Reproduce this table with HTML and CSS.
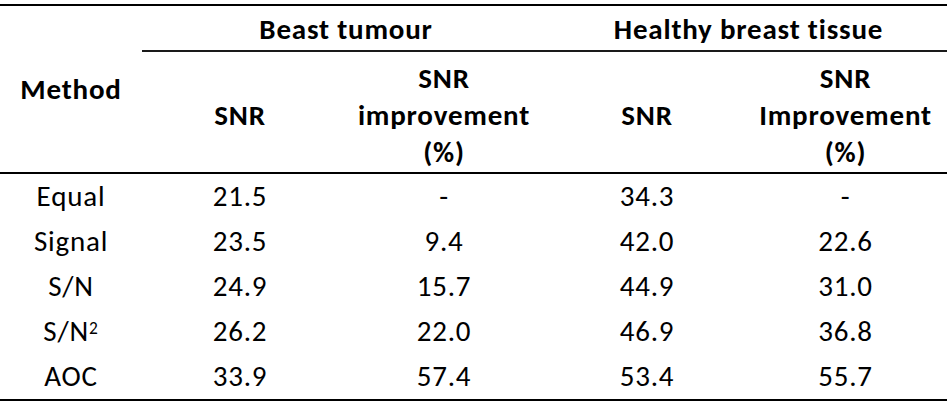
FILE: index.html
```html
<!DOCTYPE html>
<html lang="en">
<head>
<meta charset="utf-8">
<title>SNR table</title>
<link rel="stylesheet" href="styles.css">
</head>
<body>
<div class="page">
  <div class="table">
    <div class="cell head method">Method</div>
    <div class="cell head group">Beast tumour</div>
    <div class="cell head group">Healthy breast tissue</div>

    <div class="cell head sub">SNR</div>
    <div class="cell head sub multi">SNR<br>improvement<br>(%)</div>
    <div class="cell head sub">SNR</div>
    <div class="cell head sub multi">SNR<br>Improvement<br>(%)</div>

    <div class="cell">Equal</div><div class="cell">21.5</div><div class="cell">-</div><div class="cell">34.3</div><div class="cell">-</div>
    <div class="cell">Signal</div><div class="cell">23.5</div><div class="cell">9.4</div><div class="cell">42.0</div><div class="cell">22.6</div>
    <div class="cell">S/N</div><div class="cell">24.9</div><div class="cell">15.7</div><div class="cell">44.9</div><div class="cell">31.0</div>
    <div class="cell">S/N<sup class="sup">2</sup></div><div class="cell">26.2</div><div class="cell">22.0</div><div class="cell">46.9</div><div class="cell">36.8</div>
    <div class="cell">AOC</div><div class="cell">33.9</div><div class="cell">57.4</div><div class="cell">53.4</div><div class="cell">55.7</div>
  </div>
</div>
</body>
</html>
```

FILE: styles.css
```css
html, body {
  margin: 0;
  padding: 0;
  background: #ffffff;
}

body {
  font-family: "Carlito", "Lato", "Liberation Sans", sans-serif;
  font-size: 29px;
  letter-spacing: 0.8px;
  color: #000;
}

.page {
  padding-top: 4px;
}

.table {
  width: 947px;
  display: grid;
  grid-template-columns: 142px 196px 212px 194px 203px;
  grid-template-rows: 46px 122px repeat(5, 45px);
  border-top: 2px solid #000;
  border-bottom: 2px solid #000;
}

.cell {
  box-sizing: border-box;
  display: flex;
  align-items: center;
  justify-content: center;
  text-align: center;
  line-height: 1.2;
  white-space: nowrap;
}

.head {
  font-weight: 700;
}

.method {
  grid-row: 1 / span 2;
  border-bottom: 2px solid #000;
}

.group {
  grid-column: span 2;
  border-bottom: 2px solid #1a1a1a;
  padding-top: 2px;
}

.sub {
  border-bottom: 2px solid #000;
  padding-top: 6px;
}

.multi {
  line-height: 37px;
}

.sup {
  font-size: 0.6em;
  line-height: 0;
  position: relative;
  top: -0.2em;
  vertical-align: super;
}
```
